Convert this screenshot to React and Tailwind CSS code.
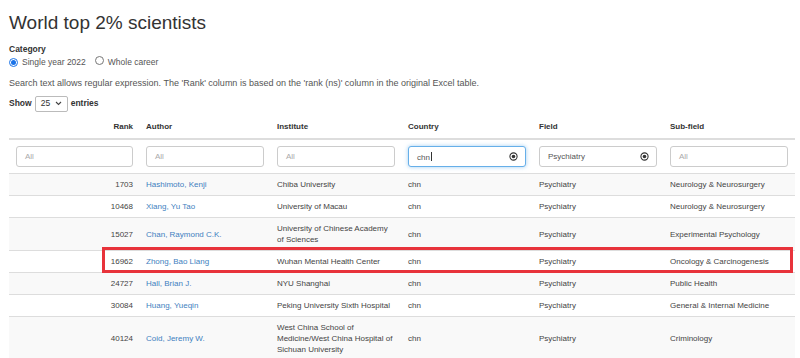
import React from "react";

const rows = [
  { rank: 1703, author: "Hashimoto, Kenji", inst: "Chiba University", sub: "Neurology & Neurosurgery" },
  { rank: 10468, author: "Xiang, Yu Tao", inst: "University of Macau", sub: "Neurology & Neurosurgery" },
  { rank: 15027, author: "Chan, Raymond C.K.", inst: "University of Chinese Academy of Sciences", sub: "Experimental Psychology" },
  { rank: 16962, author: "Zhong, Bao Liang", inst: "Wuhan Mental Health Center", sub: "Oncology & Carcinogenesis" },
  { rank: 24727, author: "Hall, Brian J.", inst: "NYU Shanghai", sub: "Public Health" },
  { rank: 30084, author: "Huang, Yueqin", inst: "Peking University Sixth Hospital", sub: "General & Internal Medicine" },
  { rank: 40124, author: "Coid, Jeremy W.", inst: "West China School of Medicine/West China Hospital of Sichuan University", sub: "Criminology" },
];

const columns = ["Rank", "Author", "Institute", "Country", "Field", "Sub-field"];

function ClearIcon() {
  return (
    <svg width="9" height="9" viewBox="0 0 10 10" className="shrink-0">
      <circle cx="5" cy="5" r="4" fill="none" stroke="#333" strokeWidth="1.2" />
      <circle cx="5" cy="5" r="2" fill="#333" />
    </svg>
  );
}

function Radio({ checked }) {
  return (
    <span
      className={`inline-flex h-[9px] w-[9px] items-center justify-center rounded-full border ${
        checked ? "border-[#1a73e8] bg-white" : "border-[#777] bg-white"
      }`}
    >
      {checked && <span className="h-[5px] w-[5px] rounded-full bg-[#1a73e8]" />}
    </span>
  );
}

function FilterInput({ value, placeholder, focused, clear }) {
  return (
    <div
      className={`flex h-[21px] items-center rounded-[3px] border bg-white pl-[8px] pr-[7px] text-left ${
        focused
          ? "border-[#66afe9] shadow-[0_0_4px_rgba(102,175,233,0.6)]"
          : "border-[#ccc]"
      }`}
    >
      <span className={`flex-1 text-[8px] ${value ? "text-[#555]" : "text-[#aaa]"}`}>
        {value || placeholder}
        {focused && <span className="ml-[1px] inline-block h-[9px] w-px translate-y-[1px] bg-[#333]" />}
      </span>
      {clear && <ClearIcon />}
    </div>
  );
}

export default function App() {
  return (
    <div className="relative min-h-[358px] bg-white px-[9px] font-['Liberation_Sans',Arial,sans-serif] text-[#333]">
      {/* ── Heading & options ─────────────────────────── */}
      <h1 className="pt-[10px] text-[19px] leading-[26px]">World top 2% scientists</h1>
      <div className="mt-[7px] text-[8.5px] font-bold leading-[12px]">Category</div>
      <div className="mt-[1px] flex h-[12px] items-center text-[8.5px] text-[#555]">
        <Radio checked />
        <span className="ml-[4px]">Single year 2022</span>
        <span className="ml-[9px]">
          <Radio />
        </span>
        <span className="ml-[4px]">Whole career</span>
      </div>
      <p className="mt-[9px] text-[9px] leading-[12px] text-[#555]">
        Search text allows regular expression. The 'Rank' column is based on the 'rank (ns)' column in the original
        Excel table.
      </p>
      <div className="mt-[6px] flex h-[17px] items-center text-[8.5px] font-bold">
        <span>Show</span>
        <div className="ml-[3px] flex h-[16px] w-[33px] items-center justify-between rounded-[2px] border border-[#bbb] px-[5px] font-normal">
          <span>25</span>
          <svg width="7" height="5" viewBox="0 0 7 5">
            <path d="M1 1l2.5 2.5L6 1" fill="none" stroke="#444" strokeWidth="1.1" />
          </svg>
        </div>
        <span className="ml-[3px]">entries</span>
      </div>

      {/* ── Results table ─────────────────────────────── */}
      <table className="mt-[3px] w-[786px] table-fixed border-collapse text-[8px] leading-[11px]">
        <thead>
          <tr className="border-b-2 border-[#ddd]">
            {columns.map((c, i) => (
              <th
                key={c}
                className={`py-[6px] pl-[6px] pr-[7px] font-bold ${i === 0 ? "text-right" : "text-left"}`}
              >
                {c}
              </th>
            ))}
          </tr>
          <tr>
            <th className="py-[6px] pl-[7px] pr-[7px] font-normal">
              <FilterInput placeholder="All" />
            </th>
            <th className="py-[6px] pl-[6px] pr-[7px] font-normal">
              <FilterInput placeholder="All" />
            </th>
            <th className="py-[6px] pl-[6px] pr-[7px] font-normal">
              <FilterInput placeholder="All" />
            </th>
            <th className="py-[6px] pl-[6px] pr-[7px] font-normal">
              <FilterInput value="chn" focused clear />
            </th>
            <th className="py-[6px] pl-[6px] pr-[7px] font-normal">
              <FilterInput value="Psychiatry" clear />
            </th>
            <th className="py-[6px] pl-[6px] pr-[7px] font-normal">
              <FilterInput placeholder="All" />
            </th>
          </tr>
        </thead>
        <tbody className="text-[#444]">
          {rows.map((r, i) => (
            <tr key={r.rank} className={`border-t border-[#ddd] ${i % 2 === 0 ? "bg-[#f9f9f9]" : "bg-white"}`}>
              <td className="py-[5px] pl-[6px] pr-[7px] text-right">{r.rank}</td>
              <td className="py-[5px] pl-[6px] pr-[7px] text-[#3f7fc0]">{r.author}</td>
              <td className="py-[5px] pl-[6px] pr-[7px]">{r.inst}</td>
              <td className="py-[5px] pl-[6px] pr-[7px]">chn</td>
              <td className="py-[5px] pl-[6px] pr-[7px]">Psychiatry</td>
              <td className="py-[5px] pl-[6px] pr-[7px]">{r.sub}</td>
            </tr>
          ))}
        </tbody>
      </table>

      {/* highlight annotation */}
      <div className="pointer-events-none absolute left-[102px] top-[247px] h-[26px] w-[691px] border-[3px] border-[#e8333b]" />
    </div>
  );
}
